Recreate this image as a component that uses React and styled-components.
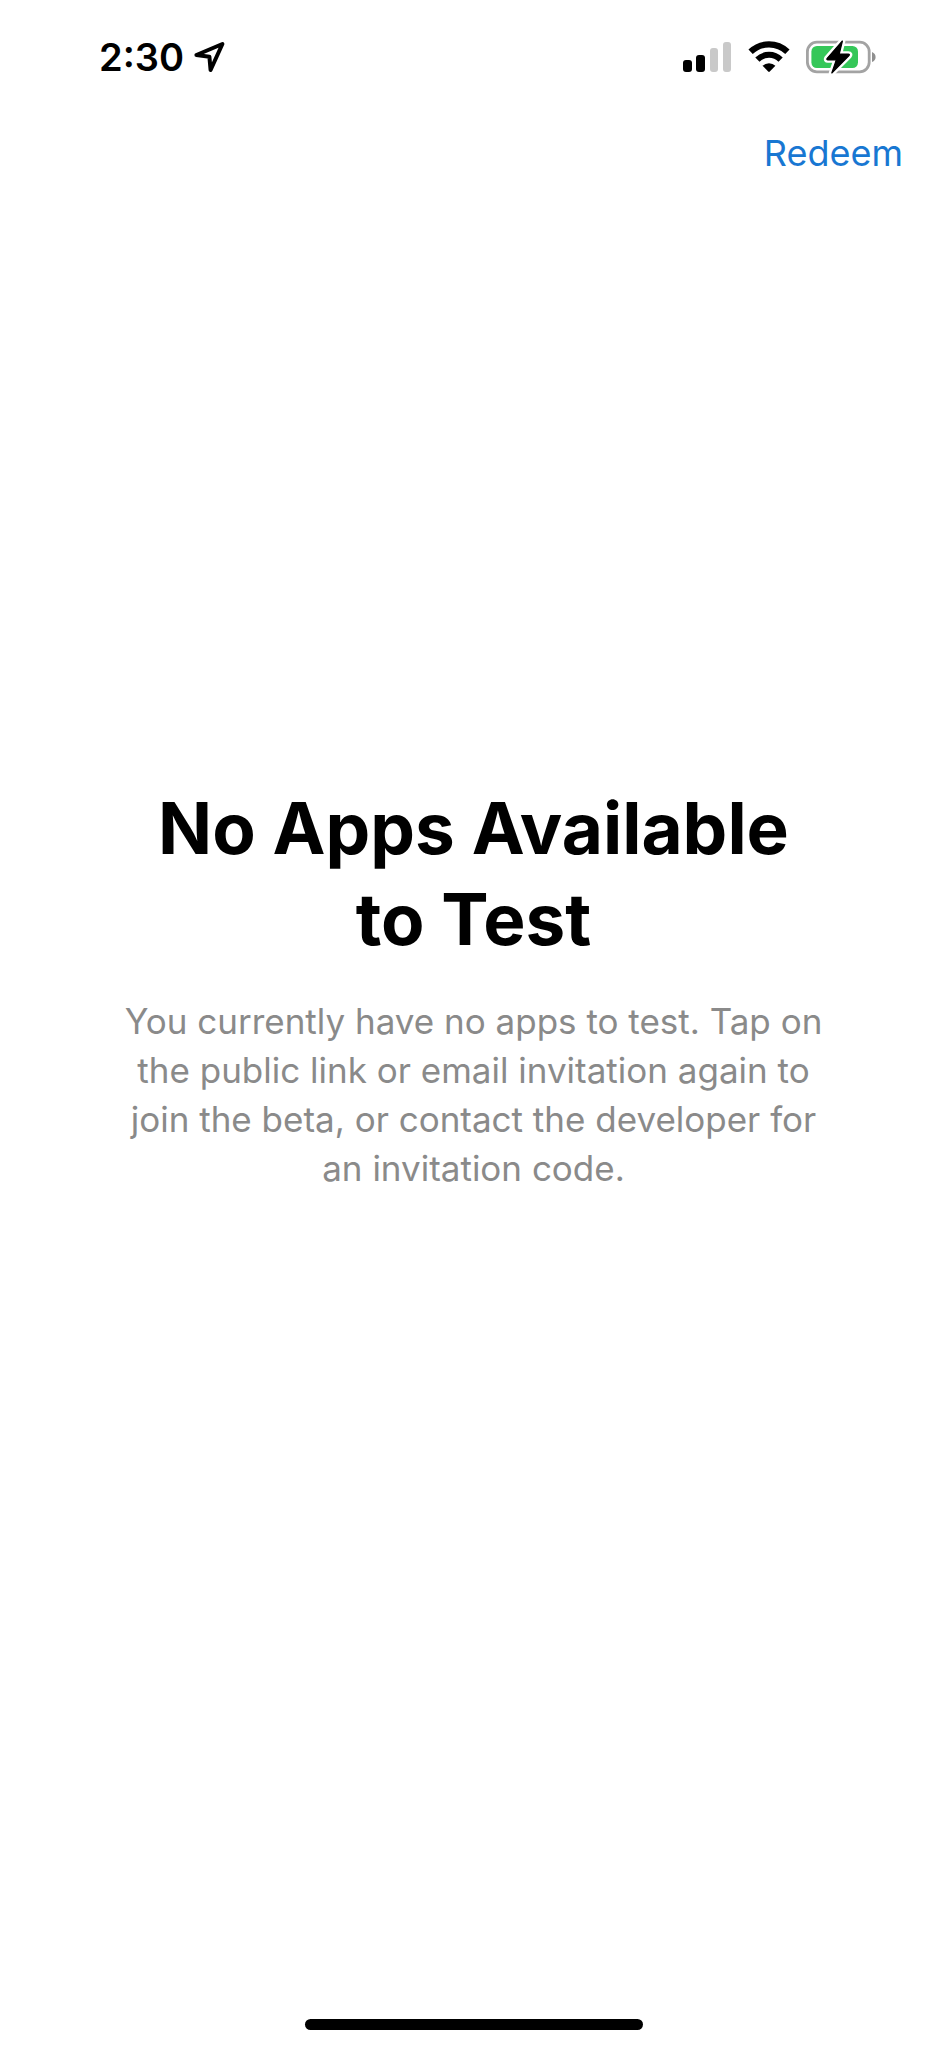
import React from "react";
import styled, { createGlobalStyle } from "styled-components";

const GlobalStyle = createGlobalStyle`
  *, *::before, *::after { box-sizing: border-box; }
  body {
    margin: 0;
    background: #fff;
    color: #000;
    font-family: Inter, "Liberation Sans", sans-serif;
  }
`;

const Screen = styled.div`
  display: flex;
  flex-direction: column;
  min-height: 100vh;
`;

const StatusBar = styled.header`
  display: flex;
  align-items: center;
  justify-content: space-between;
  height: 113px;
  padding: 0 71px 0 99px;
`;

const StatusGroup = styled.div`
  display: flex;
  align-items: center;
  gap: ${({ $gap }) => $gap}px;
`;

const Clock = styled.time`
  font-size: 38px;
  font-weight: 600;
  line-height: 48px;
`;

const Icon = styled.svg`
  display: block;
  flex: none;
`;

const NavBar = styled.nav`
  display: flex;
  justify-content: flex-end;
  padding: 16px 44px;
`;

const NavButton = styled.button`
  padding: 0;
  border: 0;
  background: none;
  color: #1877d2;
  font: inherit;
  font-size: 36px;
  line-height: 49px;
  cursor: pointer;
`;

const EmptyState = styled.main`
  display: flex;
  flex: 1;
  flex-direction: column;
  align-items: center;
  justify-content: center;
  gap: 32px;
  padding: 0 112px 237px;
  text-align: center;
`;

const Title = styled.h1`
  max-width: 660px;
  margin: 0;
  font-size: 71px;
  font-weight: 700;
  line-height: 91px;
`;

const Message = styled.p`
  max-width: 720px;
  margin: 0;
  color: #8a8a8a;
  font-size: 35px;
  line-height: 49px;
`;

const HomeArea = styled.footer`
  display: flex;
  justify-content: center;
  padding-bottom: 18px;
`;

const HomeIndicator = styled.div`
  width: 338px;
  height: 11px;
  border-radius: 6px;
  background: #000;
`;

function LocationIcon() {
  return (
    <Icon width="31" height="32" viewBox="0 0 31 32" aria-hidden="true">
      <path
        d="M2.4 14 L28.4 3 L16.6 29 L15.4 15.8 Z"
        fill="none"
        stroke="#000"
        strokeWidth="4"
        strokeLinejoin="round"
      />
    </Icon>
  );
}

function SignalIcon() {
  return (
    <Icon width="49" height="32" viewBox="0 0 49 32" role="img" aria-label="Signal">
      <rect x="0" y="19" width="9" height="12" rx="3" />
      <rect x="13" y="14" width="9" height="17" rx="3" />
      <rect x="27" y="7" width="8" height="24" rx="3" fill="#c9c9c9" />
      <rect x="40" y="1" width="8" height="30" rx="3" fill="#c9c9c9" />
    </Icon>
  );
}

function WifiIcon() {
  return (
    <Icon width="42" height="32" viewBox="0 0 42 32" role="img" aria-label="Wi-Fi">
      <path d="M2.6 10.8 A26.5 26.5 0 0 1 39.4 10.8" fill="none" stroke="#000" strokeWidth="6.2" />
      <path d="M9.4 18.6 A16.4 16.4 0 0 1 32.6 18.6" fill="none" stroke="#000" strokeWidth="6" />
      <path d="M14.6 24.8 A9 9 0 0 1 27.4 24.8 L21.8 30.6 Q21 31.4 20.2 30.6 Z" />
    </Icon>
  );
}

function BatteryIcon() {
  return (
    <Icon width="70" height="36" viewBox="0 0 70 36" role="img" aria-label="Battery charging">
      <rect x="1.4" y="3.2" width="61.8" height="29.6" rx="9.5" fill="#fff" stroke="#a3a3a3" strokeWidth="2.8" />
      <path d="M66 13 Q69.6 14.5 69.6 18 Q69.6 21.5 66 23 Z" fill="#8f8f8f" />
      <rect x="5.4" y="7" width="46.6" height="22" rx="5.5" fill="#35c759" />
      <path
        d="M36.4 2 L21 19.6 Q20.4 20.8 21.8 20.8 L30.4 20.8 L25.8 34 L43 16.6 Q44 15.2 42.4 15.2 L33.2 15.2 Z"
        fill="#000"
        stroke="#fff"
        strokeWidth="6"
        strokeLinejoin="round"
        paintOrder="stroke"
      />
      <path
        d="M36.4 2 L21 19.6 Q20.4 20.8 21.8 20.8 L30.4 20.8 L25.8 34 L43 16.6 Q44 15.2 42.4 15.2 L33.2 15.2 Z"
        stroke="#000"
        strokeWidth="1.2"
        strokeLinejoin="round"
      />
    </Icon>
  );
}

export default function App() {
  return (
    <Screen>
      <GlobalStyle />
      <StatusBar>
        <StatusGroup $gap={10}>
          <Clock>2:30</Clock>
          <LocationIcon />
        </StatusGroup>
        <StatusGroup $gap={16}>
          <SignalIcon />
          <WifiIcon />
          <BatteryIcon />
        </StatusGroup>
      </StatusBar>
      <NavBar>
        <NavButton type="button">Redeem</NavButton>
      </NavBar>
      <EmptyState>
        <Title>No Apps Available to Test</Title>
        <Message>
          You currently have no apps to test. Tap on the public link or email
          invitation again to join the beta, or contact the developer for an
          invitation code.
        </Message>
      </EmptyState>
      <HomeArea>
        <HomeIndicator />
      </HomeArea>
    </Screen>
  );
}
